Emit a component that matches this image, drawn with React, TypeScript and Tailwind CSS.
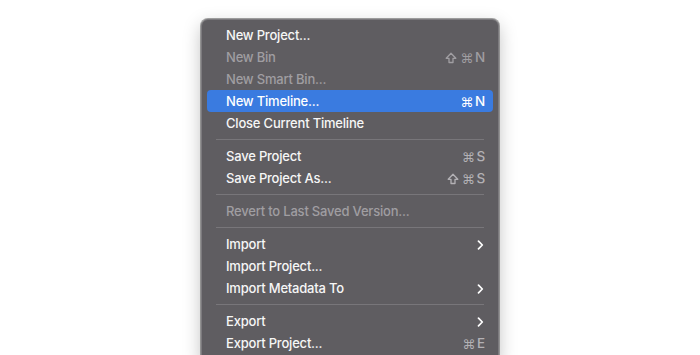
import React from "react";

type Item =
  | { type: "sep" }
  | {
      type: "item";
      label: string;
      disabled?: boolean;
      active?: boolean;
      keys?: string[];
      sub?: boolean;
      dimKeys?: boolean;
    };

const items: Item[] = [
  { type: "item", label: "New Project..." },
  { type: "item", label: "New Bin", disabled: true, keys: ["⇧", "⌘", "N"] },
  { type: "item", label: "New Smart Bin...", disabled: true },
  { type: "item", label: "New Timeline...", active: true, keys: ["⌘", "N"] },
  { type: "item", label: "Close Current Timeline" },
  { type: "sep" },
  { type: "item", label: "Save Project", keys: ["⌘", "S"], dimKeys: true },
  { type: "item", label: "Save Project As...", keys: ["⇧", "⌘", "S"], dimKeys: true },
  { type: "sep" },
  { type: "item", label: "Revert to Last Saved Version...", disabled: true },
  { type: "sep" },
  { type: "item", label: "Import", sub: true },
  { type: "item", label: "Import Project..." },
  { type: "item", label: "Import Metadata To", sub: true },
  { type: "sep" },
  { type: "item", label: "Export", sub: true },
  { type: "item", label: "Export Project...", keys: ["⌘", "E"], dimKeys: true },
];

function ShiftIcon() {
  return (
    <svg width="12" height="12" viewBox="0 0 12 12" className="mr-[1px]">
      <path
        d="M6 1.3 L10.8 6.3 H8 V10.5 H4 V6.3 H1.2 Z"
        fill="none"
        stroke="currentColor"
        strokeWidth="1.3"
        strokeLinejoin="round"
      />
    </svg>
  );
}

function Keys({ keys, className }: { keys: string[]; className: string }) {
  return (
    <span className={`flex items-center gap-[2px] ${className}`}>
      {keys.map((k, i) =>
        k === "⇧" ? (
          <ShiftIcon key={i} />
        ) : k === "⌘" ? (
          <span key={i} className="font-['DejaVu_Sans',sans-serif] text-[13px] leading-none">
            {k}
          </span>
        ) : (
          <span key={i} className="text-[13.5px] leading-none">
            {k}
          </span>
        )
      )}
    </span>
  );
}

function Chevron() {
  return (
    <svg width="7" height="10" viewBox="0 0 7 10" className="mr-[1px]">
      <path d="M1.5 1.2 L5.3 5 L1.5 8.8" fill="none" stroke="#ffffff" strokeWidth="1.7" strokeLinecap="round" strokeLinejoin="round" />
    </svg>
  );
}

export default function App() {
  return (
    <div className="w-[700px] h-[355px] bg-white overflow-hidden font-['Inter',sans-serif]">
      <div className="mx-auto mt-[19px] w-[298px] rounded-[7px] bg-[#5f5d61] border border-[#7c7a7e] shadow-[0_0_0_1px_rgba(0,0,0,0.35),0_6px_18px_rgba(0,0,0,0.25)] px-[5px] pt-[4px] pb-2">
        {items.map((it, i) =>
          it.type === "sep" ? (
            <div key={i} className="h-[11px] flex items-center px-[9px]">
              <div className="h-px w-full bg-[#78767a]" />
            </div>
          ) : (
            <div
              key={i}
              className={`h-[22px] flex items-center justify-between pt-[2px] pl-[19px] pr-[8px] rounded-[4px] text-[13px] font-medium tracking-[-0.2px] ${
                it.active ? "bg-[#3a7be0] text-white" : it.disabled ? "text-[#a09ea2]" : "text-[#f6f6f6]"
              }`}
            >
              <span>{it.label}</span>
              {it.keys && (
                <Keys
                  keys={it.keys}
                  className={
                    it.active ? "text-white" : it.disabled ? "text-[#a09ea2]" : it.dimKeys ? "text-[#b3b1b5]" : "text-white"
                  }
                />
              )}
              {it.sub && <Chevron />}
            </div>
          )
        )}
      </div>
    </div>
  );
}
